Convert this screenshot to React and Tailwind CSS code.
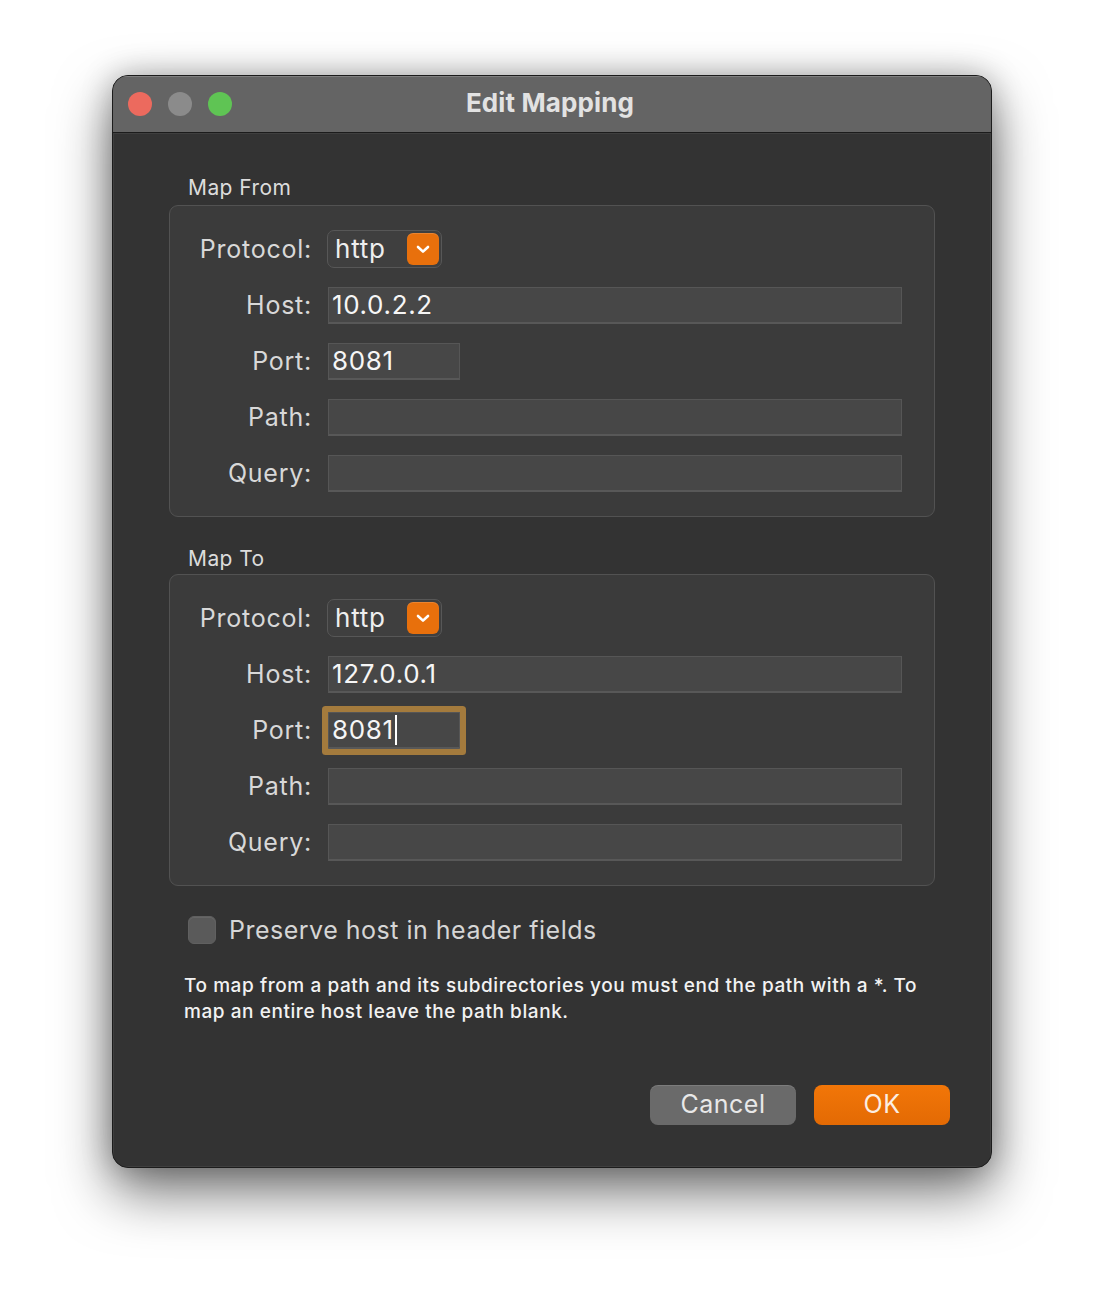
import React from "react";

const FONT = { fontFamily: "Inter, 'Noto Sans', 'Liberation Sans', sans-serif" };

function Chevron() {
  return (
    <svg width="16" height="12" viewBox="0 0 16 12" fill="none">
      <path d="M3 4 L8 8.6 L13 4" stroke="white" strokeWidth="2.6" strokeLinecap="round" strokeLinejoin="round" />
    </svg>
  );
}

function Label({ children }) {
  return (
    <div className="w-[142px] shrink-0 text-right text-[25px] tracking-[0.03em] text-[#d8d8d8] leading-none">
      {children}
    </div>
  );
}

function Field({ value, width = "w-[574px]", focused = false }) {
  return (
    <div
      className={
        "h-[37px] bg-[#474747] border-t border-x border-[#565656] border-b-2 border-b-[#585858] flex items-center pl-[3px] text-[26px] text-[#f6f6f6] leading-none tracking-[0.025em] " +
        width +
        (focused ? " rounded-[1px] shadow-[0_0_0_6px_#a47b3d]" : "")
      }
    >
      <span>{value}</span>
      {focused && <span className="ml-[1px] w-[2px] h-[30px] bg-white" />}
    </div>
  );
}

function Row({ label, children }) {
  return (
    <div className="flex items-center h-[56px] gap-[16px]">
      <Label>{label}</Label>
      {children}
    </div>
  );
}

function Popup() {
  return (
    <div className="-ml-[1px] w-[115px] h-[38px] rounded-[7px] bg-[#3f3f3f] border border-[#575757] flex items-center justify-between pl-[7px] pr-[2px]">
      <span className="text-[26px] text-[#eeeeee] leading-none tracking-[0.03em]">http</span>
      <div className="w-[32px] h-[32px] rounded-[6px] bg-[#e8700c] flex items-center justify-center shadow-[inset_0_1px_0_rgba(255,255,255,0.15)]">
        <Chevron />
      </div>
    </div>
  );
}

function Group({ host, focusedPort }) {
  return (
    <div className="h-[312px] shrink-0 rounded-[9px] bg-[#3b3b3b] border border-[#525252] py-[15px]">
      <Row label="Protocol:">
        <Popup />
      </Row>
      <Row label="Host:">
        <Field value={host} />
      </Row>
      <Row label="Port:">
        <Field value="8081" width="w-[132px]" focused={focusedPort} />
      </Row>
      <Row label="Path:">
        <Field value="" />
      </Row>
      <Row label="Query:">
        <Field value="" />
      </Row>
    </div>
  );
}

export default function App() {
  return (
    <div className="w-[1104px] h-[1316px] bg-white pt-[75px] pl-[112px]" style={FONT}>
      <div className="w-[880px] h-[1093px] rounded-[16px] overflow-hidden bg-[#333333] border border-[#1c1c1c] shadow-[0_24px_55px_rgba(0,0,0,0.55),0_0_30px_rgba(0,0,0,0.25)] flex flex-col">
        {/* Title bar */}
        <div className="h-[57px] shrink-0 bg-[#646464] border-b border-[#1c1c1c] relative flex items-center shadow-[inset_0_1px_0_rgba(255,255,255,0.18)]">
          <div className="flex items-center gap-[16px] pl-[15px]">
            <div className="w-[24px] h-[24px] rounded-full bg-[#ec6a5e]" />
            <div className="w-[24px] h-[24px] rounded-full bg-[#8b8b8b]" />
            <div className="w-[24px] h-[24px] rounded-full bg-[#5fc454]" />
          </div>
          <div className="absolute inset-0 flex items-center justify-center text-[26px] font-bold text-[#e2e2e2] tracking-[0.005em] pb-[3px] pr-[4px]">
            Edit Mapping
          </div>
        </div>

        {/* Body */}
        <div className="flex-1 flex flex-col px-[56px] shadow-[inset_0_0_0_1px_rgba(255,255,255,0.06)]">
          <div className="mt-[43px] mb-[5px] pl-[19px] h-[24px] shrink-0 text-[21px] leading-[24px] text-[#dcdcdc] tracking-[0.02em]">
            Map From
          </div>
          <Group host="10.0.2.2" />

          <div className="mt-[30px] mb-[3px] pl-[19px] h-[24px] shrink-0 text-[21px] leading-[24px] text-[#dcdcdc] tracking-[0.02em]">
            Map To
          </div>
          <Group host="127.0.0.1" focusedPort />

          <div className="mt-[30px] pl-[19px] flex items-center gap-[13px] shrink-0">
            <div className="w-[28px] h-[28px] rounded-[6px] bg-[#5a5a5a] border border-[#606060] shadow-[inset_0_1px_0_rgba(255,255,255,0.08)]" />
            <span className="text-[25px] text-[#d6d6d6] tracking-[0.02em] leading-none">
              Preserve host in header fields
            </span>
          </div>

          <div className="mt-[29px] pl-[15px] pr-[4px] text-[19px] leading-[26px] font-medium text-[#f2f2f2] tracking-[0.03em] shrink-0">
            To map from a path and its subdirectories you must end the path with a *. To map an entire host leave the path blank.
          </div>

          <div className="mt-[60px] -mr-[15px] flex justify-end gap-[18px] shrink-0">
            <div className="w-[146px] h-[40px] rounded-[8px] bg-[#6a6a6a] flex items-center justify-center text-[25px] text-[#e8e8e8] tracking-[0.02em] shadow-[inset_0_1px_0_rgba(255,255,255,0.12)]">
              Cancel
            </div>
            <div className="w-[136px] h-[40px] rounded-[8px] bg-gradient-to-b from-[#f27608] to-[#e36a04] flex items-center justify-center text-[25px] text-[#fbeee2] tracking-[0.02em]">
              OK
            </div>
          </div>
        </div>
      </div>
    </div>
  );
}
